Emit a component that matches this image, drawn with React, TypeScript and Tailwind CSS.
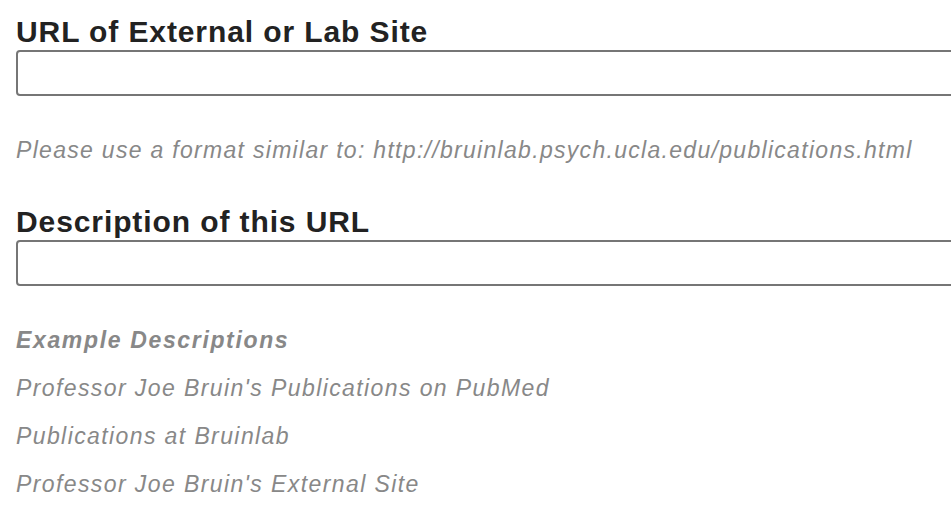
export default function App() {
  return (
    <div className="w-[951px] h-[515px] overflow-hidden bg-white font-['Liberation_Sans',Arial,sans-serif]">
      <div className="pl-4 pt-[14px] w-[1000px]">
        {/* URL field */}
        <label className="block text-[30px] leading-[36px] tracking-[0.9px] font-bold text-[#222]">
          URL of External or Lab Site
        </label>
        <div className="h-[46px] border-2 border-[#767676] rounded-[4px] bg-white"></div>
        <p className="mt-[40px] text-[23px] leading-[28px] tracking-[1.3px] italic text-[#888]">
          Please use a format similar to: http://bruinlab.psych.ucla.edu/publications.html
        </p>

        {/* Description field */}
        <label className="block mt-[40px] text-[30px] leading-[36px] tracking-[0.9px] font-bold text-[#222]">
          Description of this URL
        </label>
        <div className="h-[46px] border-2 border-[#767676] rounded-[4px] bg-white"></div>

        {/* Examples */}
        <div className="mt-[40px] flex flex-col gap-5 text-[23px] leading-[28px] tracking-[1.4px] italic text-[#888]">
          <div className="font-bold tracking-[1.65px]">Example Descriptions</div>
          <div>Professor Joe Bruin's Publications on PubMed</div>
          <div>Publications at Bruinlab</div>
          <div>Professor Joe Bruin's External Site</div>
        </div>
      </div>
    </div>
  );
}
